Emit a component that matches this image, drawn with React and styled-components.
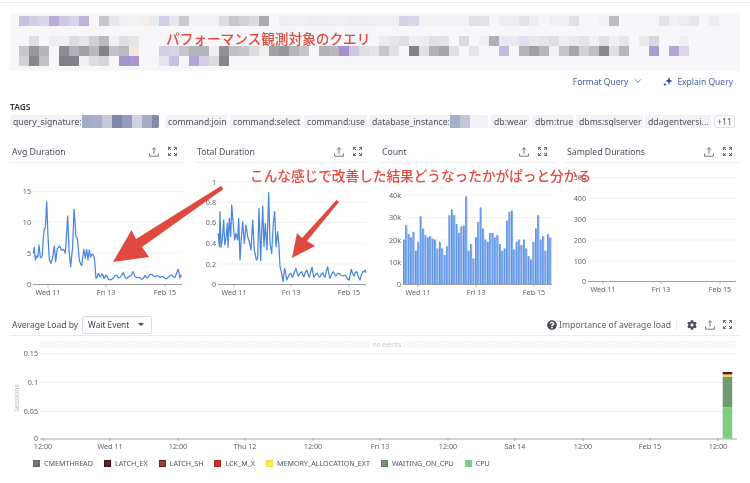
import React from 'react';
import styled, { createGlobalStyle } from 'styled-components';
import { ChevronDown } from 'lucide-react';
import { FaCog, FaQuestionCircle } from 'react-icons/fa';

const Global = createGlobalStyle`
  html, body { margin: 0; padding: 0; background: #fff; }
  body { font-family: "Noto Sans", "Open Sans", sans-serif; color: #4b4d5a; }
`;

const Page = styled.div`
  position: relative;
  width: 750px;
  height: 483px;
  overflow: hidden;
  background: #fff;
  filter: blur(0.35px);
`;
const TopRule = styled.div`
  height: 1px;
  margin-top: 2px;
  background: #e9e9ee;
`;
const QueryBlock = styled.div`
  height: 58px;
  margin: 10px 10px 0;
  background: #f7f7fa;
`;
const Mosaic = styled.svg`
  display: block;
  flex: none;
`;
const Actions = styled.div`
  display: flex;
  justify-content: flex-end;
  align-items: center;
  height: 20px;
  padding-right: 17px;
`;
const ActionLink = styled.span`
  display: inline-flex;
  align-items: center;
  gap: ${p => p.$gap || 4}px;
  margin-left: ${p => p.$ml || 0}px;
  font-size: 8.5px;
  color: #3f5fa8;
`;
const TagsLabel = styled.div`
  margin: 11px 0 0 10px;
  height: 10px;
  line-height: 10px;
  font-size: 8.4px;
  font-weight: 600;
  color: #2c2e3a;
`;
const TagRow = styled.div`
  display: flex;
  gap: 3px;
  margin: 3px 10px 0;
  height: 13px;
`;
const Tag = styled.span`
  display: inline-flex;
  align-items: center;
  flex: none;
  width: ${p => p.$w}px;
  height: 13px;
  margin-left: ${p => p.$ml || 0}px;
  padding-left: 3px;
  box-sizing: border-box;
  background: #f2f3f7;
  border-radius: 2px;
  font-size: 8.7px;
  color: #4f5260;
  white-space: nowrap;
  overflow: hidden;
`;
const MoreTag = styled(Tag)`
  background: #fff;
  border: 1px solid #dfe1e8;
  justify-content: center;
  padding: 0;
`;
const ChartGrid = styled.div`
  display: grid;
  grid-template-columns: repeat(4, 175px);
  gap: 10px;
  margin: 13px 10px 0;
`;
const PanelHead = styled.div`
  display: flex;
  align-items: center;
  height: 21px;
  padding: 0 8px 0 2px;
  border-bottom: 1px solid #efeff3;
`;
const PanelTitle = styled.span`
  flex: 1;
  font-size: 8.7px;
  color: #4b4d5a;
`;
const IconGroup = styled.span`
  display: inline-flex;
  align-items: center;
  gap: ${p => p.$gap || 9}px;
`;
const ChartSvg = styled.svg`
  display: block;
`;
const AxisText = styled.text`
  font-family: "Noto Sans", sans-serif;
  font-size: 7.2px;
  fill: #5c5e6a;
`;
const LoadSection = styled.section`
  margin: 14px 10px 0;
`;
const LoadHead = styled.div`
  display: flex;
  align-items: center;
  height: 21px;
  padding: 0 8px 0 2px;
  border-bottom: 1px solid #e9e9ee;
`;
const LoadTitle = styled.span`
  font-size: 8.5px;
  color: #4b4d5a;
`;
const Select = styled.div`
  display: flex;
  align-items: center;
  justify-content: space-between;
  box-sizing: border-box;
  width: 70px;
  height: 18px;
  margin-left: 4px;
  padding: 0 7px 0 5px;
  border: 1px solid #d9dce8;
  border-radius: 2px;
  font-size: 8.3px;
  color: #3f414e;
`;
const Caret = styled.span`
  width: 0;
  height: 0;
  border-left: 3px solid transparent;
  border-right: 3px solid transparent;
  border-top: 3.5px solid #4b4d5a;
`;
const Spacer = styled.span`
  flex: 1;
`;
const HelpText = styled.span`
  display: inline-flex;
  align-items: center;
  gap: 2px;
  font-size: 8.6px;
  color: #5a5c68;
  padding-right: 5px;
  margin-right: 10px;
  border-right: 1px solid #ececf0;
  height: 12px;
`;
const Legend = styled.div`
  display: flex;
  align-items: center;
  gap: 11px;
  height: 12px;
  margin-top: 1px;
  padding-left: 23px;
`;
const LegendItem = styled.span`
  display: inline-flex;
  align-items: center;
  gap: 4px;
  font-size: 7.15px;
  color: #4f5260;
`;
const Swatch = styled.i`
  display: block;
  box-sizing: border-box;
  width: 7px;
  height: 7px;
  background: ${p => p.$c};
  border: 1px solid ${p => p.$b || p.$c};
`;
const Note = styled.div`
  position: absolute;
  left: ${p => p.$x}px;
  top: ${p => p.$y}px;
  font-family: "Noto Sans CJK JP", sans-serif;
  font-size: 13.65px;
  line-height: 16px;
  font-weight: 500;
  color: #e2493f;
  white-space: nowrap;
`;
const ArrowLayer = styled.svg`
  position: absolute;
  left: 0;
  top: 0;
  pointer-events: none;
`;

const _ = null;
const rowsData = [
  { y: 3, c: ['c9c0e0','d5cfe8','dcd6ec','b9add6','cfc8e5','d8d2ea','bfb3da',_,'c5c7c9','e8e9ee','f0f0f4','f3f3f6','f5efec','ebebf2','d3cde6','e6e6f0','c8cacc','f3f3f6','f3f3f6','f3f3f6','dcdee2','c5c7ca','d0d2d5','dadce0','a9abae',_,'eeeef2','f0f0f4','f0f0f4','eeeef2','eeeef2','f0f0f4','f0f0f4','eeeef2','eeeef2','f0f0f4','f0f0f4','f0f0f4','d9d3e8','dcd6ea','f3f3f6','f3f3f6','f3f3f6','f3f3f6','f3f3f6','e0e1e5','e2e3e6',_,'ecedf2','eeeef2','e2e3e7','eeeff3',_,'f0f0f5','eff0f4','e0e1e5',_,_,'f3f3f6','bcbdc0',_,_,_,_,'e4e5e8','f2f2f5','ebecef','e5e6e9',_,'eeeef2'] },
  { y: 23, c: [_,'dfe0e2',_,'eeeef2','eff0f3','dcdde0','e5e6e8','cfd1d3','b8babc','f0f0f3','dfe0e3','e6e7ea',_,_,_,_,_,_,_,_,_,_,_,_,_,_,_,_,_,_,_,_,_,_,_,_,'ecedf0','e6e7ea','dfe0e3','eeeff2','ebecef','e0e1e4','e3e4e7',_,'dadbde',_,'f0f0f3','aeb0b2','e8e8ee','ebebf1','e3dfee','e8e8ee','e4e5e8','dfe0e3','f0f0f3','e9eaed','e3e4e7','f0f0f3','e0e1e4','f0f0f3','e5e6e9',_,'e9eaed','d7d8db',_,_,'f0f0f5'] },
  { y: 33, c: ['c4c6c8','95989b','b5b7b9',_,'8a8d91','b0b3b5','9fa2a5','b7b9bb','7f8388','c0c2c5','b9bbbd','f3e8dc',_,_,'d4cde6','d8d2ea','c5c7ca','b2b4b7','b2b4b7','eeeff1','8e9196','bfc1c4','c5c7ca','dadce0','f3eeea','9fa2a5','94979b','b4b6b9','c5c7ca',_,'b0b2b5','b7b9bc','a492cc','cfc8e5','dcdee1','e4e5e8','c5c7ca','dfe0e3',_,'7f8388','e0e1e4','b0b2b5','a4a6a9','e0e1e4',_,'e3e4e6',_,_,'c4bbdc',_,'b3b5b8','9fa2a5','b5b7b9','f3f3f6','c5c7ca','a4a6a9','d0d2d4','bdbfc2','85888d','dfe0e3','b5b7b9',_,_,'ab9bcf',_,'b3a5d4','dcd8ea'] },
  { y: 43, c: ['d0d2d4','85888d','bfc1c4',_,'7f8388','80848a','f0f0f3','dcdde0','d5d6d9',_,'a594cc','a997cf',_,_,'e6e4f0','c9c1e0',_,'b3a5d4','d4cde6','dcdde0','83868b'] },
];

const sigCells = ['a7acc6','a9aec9','c5c9d8','7f86ac','969cbc','d0d3de','a7acc6','858bae'];
const dbCells = ['a8adc8','c3c7d8',_,_,'dfe1ea'];

const CellStrip = ({ cells }) => (
  <Mosaic width={cells.length * 10} height="13">
    {cells.map((c, i) => c && <rect key={i} x={i * 10} y="0" width="10" height="13" fill={`#${c}`} />)}
  </Mosaic>
);

const Upload = () => (
  <svg width="10" height="10" viewBox="0 0 10 10" fill="none" stroke="#55576a" strokeWidth="0.8">
    <path d="M.6 6.4V9.2H9.4V6.4M5 7V.8M3 2.7 5 .7l2 2" />
  </svg>
);
const Expand = () => (
  <svg width="9" height="9" viewBox="0 0 9 9" fill="none" stroke="#55576a" strokeWidth="0.9">
    <path d="M.5 2.9V.5H2.9M.6.6 3 3M8.5 2.9V.5H6.1M8.4.6 6 3M.5 6.1V8.5H2.9M.6 8.4 3 6M8.5 6.1V8.5H6.1M8.4 8.4 6 6" />
  </svg>
);
const Sparkle = () => (
  <svg width="10" height="10" viewBox="0 0 10 10" fill="#2f4f9c">
    <path d="M6 1 7 3.8 9.6 5 7 6.1 6 8.8 5 6.1 2.4 5 5 3.8Z" />
    <path d="M2 6.8 2.6 8 3.8 8.6 2.6 9.1 2 10.2 1.4 9.1.3 8.6 1.4 8Z" />
  </svg>
);

// Adds the fine-grained wiggle of a dense time series between the sampled points.
const wiggle = [2.4, -3.1, 1.6, -1.8, 3.2, -2.5];
const dense = arr => arr.flatMap((p, i) => {
  const n = arr[i + 1];
  if (!n) return [p];
  const mx = (p[0] + n[0]) / 2;
  const my = (p[1] + n[1]) / 2 + wiggle[i % wiggle.length];
  return n[0] - p[0] > 5 ? [p, [mx, my]] : [p];
});
const zoomed = (arr, ox, oy) => dense(arr).map(([x, y]) => `${(ox + x / 3).toFixed(1)},${(oy + y / 3).toFixed(1)}`).join(' ');

const line1 = [[100,250],[103,232],[106,270],[110,258],[113,262],[117,225],[121,262],[127,258],[130,205],[133,178],[136,175],[140,95],[144,200],[148,268],[153,280],[158,262],[163,228],[167,275],[172,235],[178,228],[184,240],[190,238],[196,250],[203,138],[207,240],[212,290],[218,230],[222,118],[228,200],[232,205],[238,270],[245,287],[252,238],[256,265],[260,238],[264,270],[268,240],[272,262],[278,252],[283,262],[288,325],[295,310],[300,320],[306,312],[312,326],[318,315],[325,328],[340,325],[350,315],[355,323],[360,322],[370,307],[375,322],[385,322],[392,318],[398,305],[405,320],[415,322],[425,328],[435,316],[440,324],[445,320],[455,313],[465,320],[475,318],[485,320],[495,325],[505,322],[515,316],[525,322],[535,298],[540,324],[544,314]];
const line2 = [[85,190],[88,230],[90,125],[93,232],[97,210],[101,150],[104,225],[108,205],[112,160],[114,232],[118,145],[122,200],[125,105],[130,165],[134,210],[138,190],[143,210],[146,145],[150,270],[154,205],[158,155],[163,220],[168,165],[173,200],[178,215],[183,240],[188,150],[193,240],[199,270],[203,265],[207,115],[212,272],[218,108],[222,230],[226,160],[231,240],[236,68],[240,220],[245,250],[250,160],[254,125],[258,230],[263,185],[267,230],[270,290],[275,310],[279,335],[284,295],[290,330],[295,320],[302,310],[308,322],[318,295],[325,318],[335,305],[342,320],[350,300],[358,322],[366,292],[372,322],[382,310],[390,322],[398,308],[405,322],[413,290],[420,325],[430,305],[438,318],[448,310],[458,318],[468,318],[478,330],[484,298],[492,318],[500,305],[510,330],[518,305],[525,300],[528,308]];
const counts = [20,26.5,22.5,21,23.5,15,19,30.5,25,22,21,21.5,20.5,20,16,19,16,13,17,31,33.5,31,27,23,26,26.3,39.5,15,18,11.5,21,28,34.5,25,20,19,23,23,21,22,18,15,16,28.5,32.5,33,15.5,19,20,17.5,20,16,12.5,11,19,25,31,20,21.5,15,22.5,21];

const Panel = ({ title, ox, ticks, axisY, axisX, xLabels, children }) => (
  <div>
    <PanelHead>
      <PanelTitle>{title}</PanelTitle>
      <IconGroup><Upload /><Expand /></IconGroup>
    </PanelHead>
    <ChartSvg width="175" height="137" viewBox={`${ox} 163 175 137`}>
      {ticks.map(([label, y]) => (
        <g key={label}>
          {label !== '0' && <line x1={axisX[0]} x2={axisX[1]} y1={y} y2={y} stroke="#f3f3f6" />}
          <AxisText x={axisX[0] - 2} y={y + 2.5} textAnchor="end">{label}</AxisText>
        </g>
      ))}
      <line x1={axisX[0]} x2={axisX[1]} y1={axisY + 0.5} y2={axisY + 0.5} stroke="#9a9ca8" />
      {xLabels.map(([label, x]) => (
        <g key={label}>
          <line x1={x} x2={x} y1={axisY} y2={axisY + 3} stroke="#9a9ca8" strokeWidth="0.7" />
          <AxisText x={x} y={axisY + 10.5} textAnchor="middle">{label}</AxisText>
        </g>
      ))}
      {children}
    </ChartSvg>
  </div>
);

const loadTicks = [['0.15', 353], ['0.1', 382], ['0.05', 411]];
const loadLabels = [['12:00',43],['Wed 11',110],['12:00',178],['Thu 12',245],['12:00',313],['Fri 13',380],['12:00',448],['Sat 14',515],['12:00',583],['Feb 15',650],['12:00',718]];
const legend = [
  ['CMEMTHREAD', '#74767f', '#5f616b'],
  ['LATCH_EX', '#6b1a20', '#3c1014'],
  ['LATCH_SH', '#8a4a2a', '#5f3018'],
  ['LCK_M_X', '#cf352b', '#a82820'],
  ['MEMORY_ALLOCATION_EXT', '#f7e84e', '#f1dd3c'],
  ['WAITING_ON_CPU', '#6f9a70', '#5c865d'],
  ['CPU', '#80cc80', '#80cc80'],
];

export default function App() {
  return (
    <Page>
      <Global />
      <TopRule />
      <QueryBlock>
        <Mosaic width="730" height="58">
          {rowsData.map(r => r.c.map((c, i) => c && (
            <rect key={`${r.y}-${i}`} x={9 + i * 10} y={r.y} width="10" height="10" fill={`#${c}`} />
          )))}
        </Mosaic>
      </QueryBlock>
      <Actions>
        <ActionLink $gap={5}>Format Query <ChevronDown size={10} strokeWidth={1.8} /></ActionLink>
        <ActionLink $ml={20}><Sparkle /> Explain Query</ActionLink>
      </Actions>
      <TagsLabel>TAGS</TagsLabel>
      <TagRow>
        <Tag $w={149}>query_signature:<CellStrip cells={sigCells} /></Tag>
        <Tag $w={62} $ml={3}>command:join</Tag>
        <Tag $w={71}>command:select</Tag>
        <Tag $w={63}>command:use</Tag>
        <Tag $w={119} $ml={-1}>database_instance:<CellStrip cells={dbCells} /></Tag>
        <Tag $w={38}>db:wear</Tag>
        <Tag $w={41}>dbm:true</Tag>
        <Tag $w={67}>dbms:sqlserver</Tag>
        <Tag $w={66} $ml={-1}>ddagentversi...</Tag>
        <MoreTag $w={21}>+11</MoreTag>
      </TagRow>
      <ChartGrid>
        <Panel title="Avg Duration" ox={10} axisY={284} axisX={[33, 182]}
          ticks={[['15', 191.5], ['10', 222], ['5', 253], ['0', 284]]}
          xLabels={[['Wed 11', 48], ['Fri 13', 106], ['Feb 15', 165]]}>
          <polyline points={zoomed(line1, 0, 170)} fill="none" stroke="#4a86dc" strokeWidth="1.25" strokeLinejoin="round" />
        </Panel>
        <Panel title="Total Duration" ox={195} axisY={284} axisX={[218, 366]}
          ticks={[['1', 182], ['0.8', 202], ['0.6', 222.5], ['0.4', 243], ['0.2', 264], ['0', 284]]}
          xLabels={[['Wed 11', 234], ['Fri 13', 291], ['Feb 15', 349]]}>
          <polyline points={zoomed(line2, 190, 170)} fill="none" stroke="#4a86dc" strokeWidth="1.25" strokeLinejoin="round" />
        </Panel>
        <Panel title="Count" ox={380} axisY={284} axisX={[403, 552]}
          ticks={[['40k', 195], ['30k', 217.5], ['20k', 240], ['10k', 262], ['0', 284]]}
          xLabels={[['Wed 11', 418], ['Fri 13', 476], ['Feb 15', 534]]}>
          {counts.map((v, i) => {
            const h = v * 2.22;
            const x = 403 + i * 2.4;
            return (
              <g key={i}>
                <rect x={x} y={284 - h} width="2" height={h} fill="#7eaaee" />
                <rect x={x} y={284 - h} width="0.6" height={h} fill="#4a86e2" />
              </g>
            );
          })}
        </Panel>
        <Panel title="Sampled Durations" ox={565} axisY={281} axisX={[588, 736]}
          ticks={[['500', 177.5], ['400', 198.5], ['300', 219.5], ['200', 240], ['100', 261], ['0', 281]]}
          xLabels={[['Wed 11', 603], ['Fri 13', 661], ['Feb 15', 720]]} />
      </ChartGrid>
      <LoadSection>
        <LoadHead>
          <LoadTitle>Average Load by</LoadTitle>
          <Select>Wait Event <Caret /></Select>
          <Spacer />
          <HelpText><FaQuestionCircle size={10} color="#4b4d5a" /> Importance of average load</HelpText>
          <IconGroup $gap={8}><FaCog size={10} color="#4b4d5a" /><Upload /><Expand /></IconGroup>
        </LoadHead>
        <ChartSvg width="730" height="120" viewBox="10 336 730 120">
          <defs>
            <pattern id="hatch" width="3" height="3" patternUnits="userSpaceOnUse">
              <path d="M0 0 3 3M3 0 0 3" stroke="#ececf1" strokeWidth="0.6" />
            </pattern>
          </defs>
          <rect x="40" y="341" width="696" height="7" fill="url(#hatch)" />
          <rect x="371" y="341" width="32" height="7" fill="#fff" />
          <text x="387" y="347" textAnchor="middle" fontSize="6.3" fill="#c6c7cf" fontFamily="Noto Sans, sans-serif">no events</text>
          {loadTicks.map(([l, y]) => (
            <g key={l}>
              <line x1="40" x2="737" y1={y + 0.5} y2={y + 0.5} stroke="#f0f0f4" />
              <AxisText x="38" y={y + 2.5} textAnchor="end">{l}</AxisText>
            </g>
          ))}
          <AxisText x="38" y="441" textAnchor="end">0</AxisText>
          <line x1="40" x2="737" y1="439" y2="439" stroke="#a6a8b2" />
          <text transform="translate(19 398) rotate(-90)" textAnchor="middle" fontSize="6.8" fill="#b9bac2" fontFamily="Noto Sans, sans-serif">Sessions</text>
          {loadLabels.map(([l, x], i) => (
            <g key={i}>
              <line x1={x} x2={x} y1="438" y2="441" stroke="#9a9ca8" strokeWidth="0.7" />
              <AxisText x={x} y="449" textAnchor="middle">{l}</AxisText>
            </g>
          ))}
          <rect x="722.7" y="372" width="9.5" height="2.6" fill="#5a1a1e" />
          <rect x="722.7" y="374.6" width="9.5" height="2.6" fill="#f4dd55" />
          <rect x="722.7" y="377" width="9.5" height="30.6" fill="#6f9a70" />
          <rect x="722.7" y="407.6" width="9.5" height="31" fill="#80cc80" />
        </ChartSvg>
        <Legend>
          {legend.map(([name, c, b]) => (
            <LegendItem key={name}><Swatch $c={c} $b={b} />{name}</LegendItem>
          ))}
        </Legend>
      </LoadSection>
      <ArrowLayer width="750" height="483" viewBox="0 0 750 483">
        <polygon points="113,262 131.5,230 136,239 221,186 223.5,189 142,247 149,257" fill="#e0493e" />
        <polygon points="292,258 297,233 302,238 336.5,200 339,202 307,241 315,246" fill="#e0493e" />
      </ArrowLayer>
      <Note $x={166} $y={30}>パフォーマンス観測対象のクエリ</Note>
      <Note $x={250} $y={167}>こんな感じで改善した結果どうなったかがぱっと分かる</Note>
    </Page>
  );
}
